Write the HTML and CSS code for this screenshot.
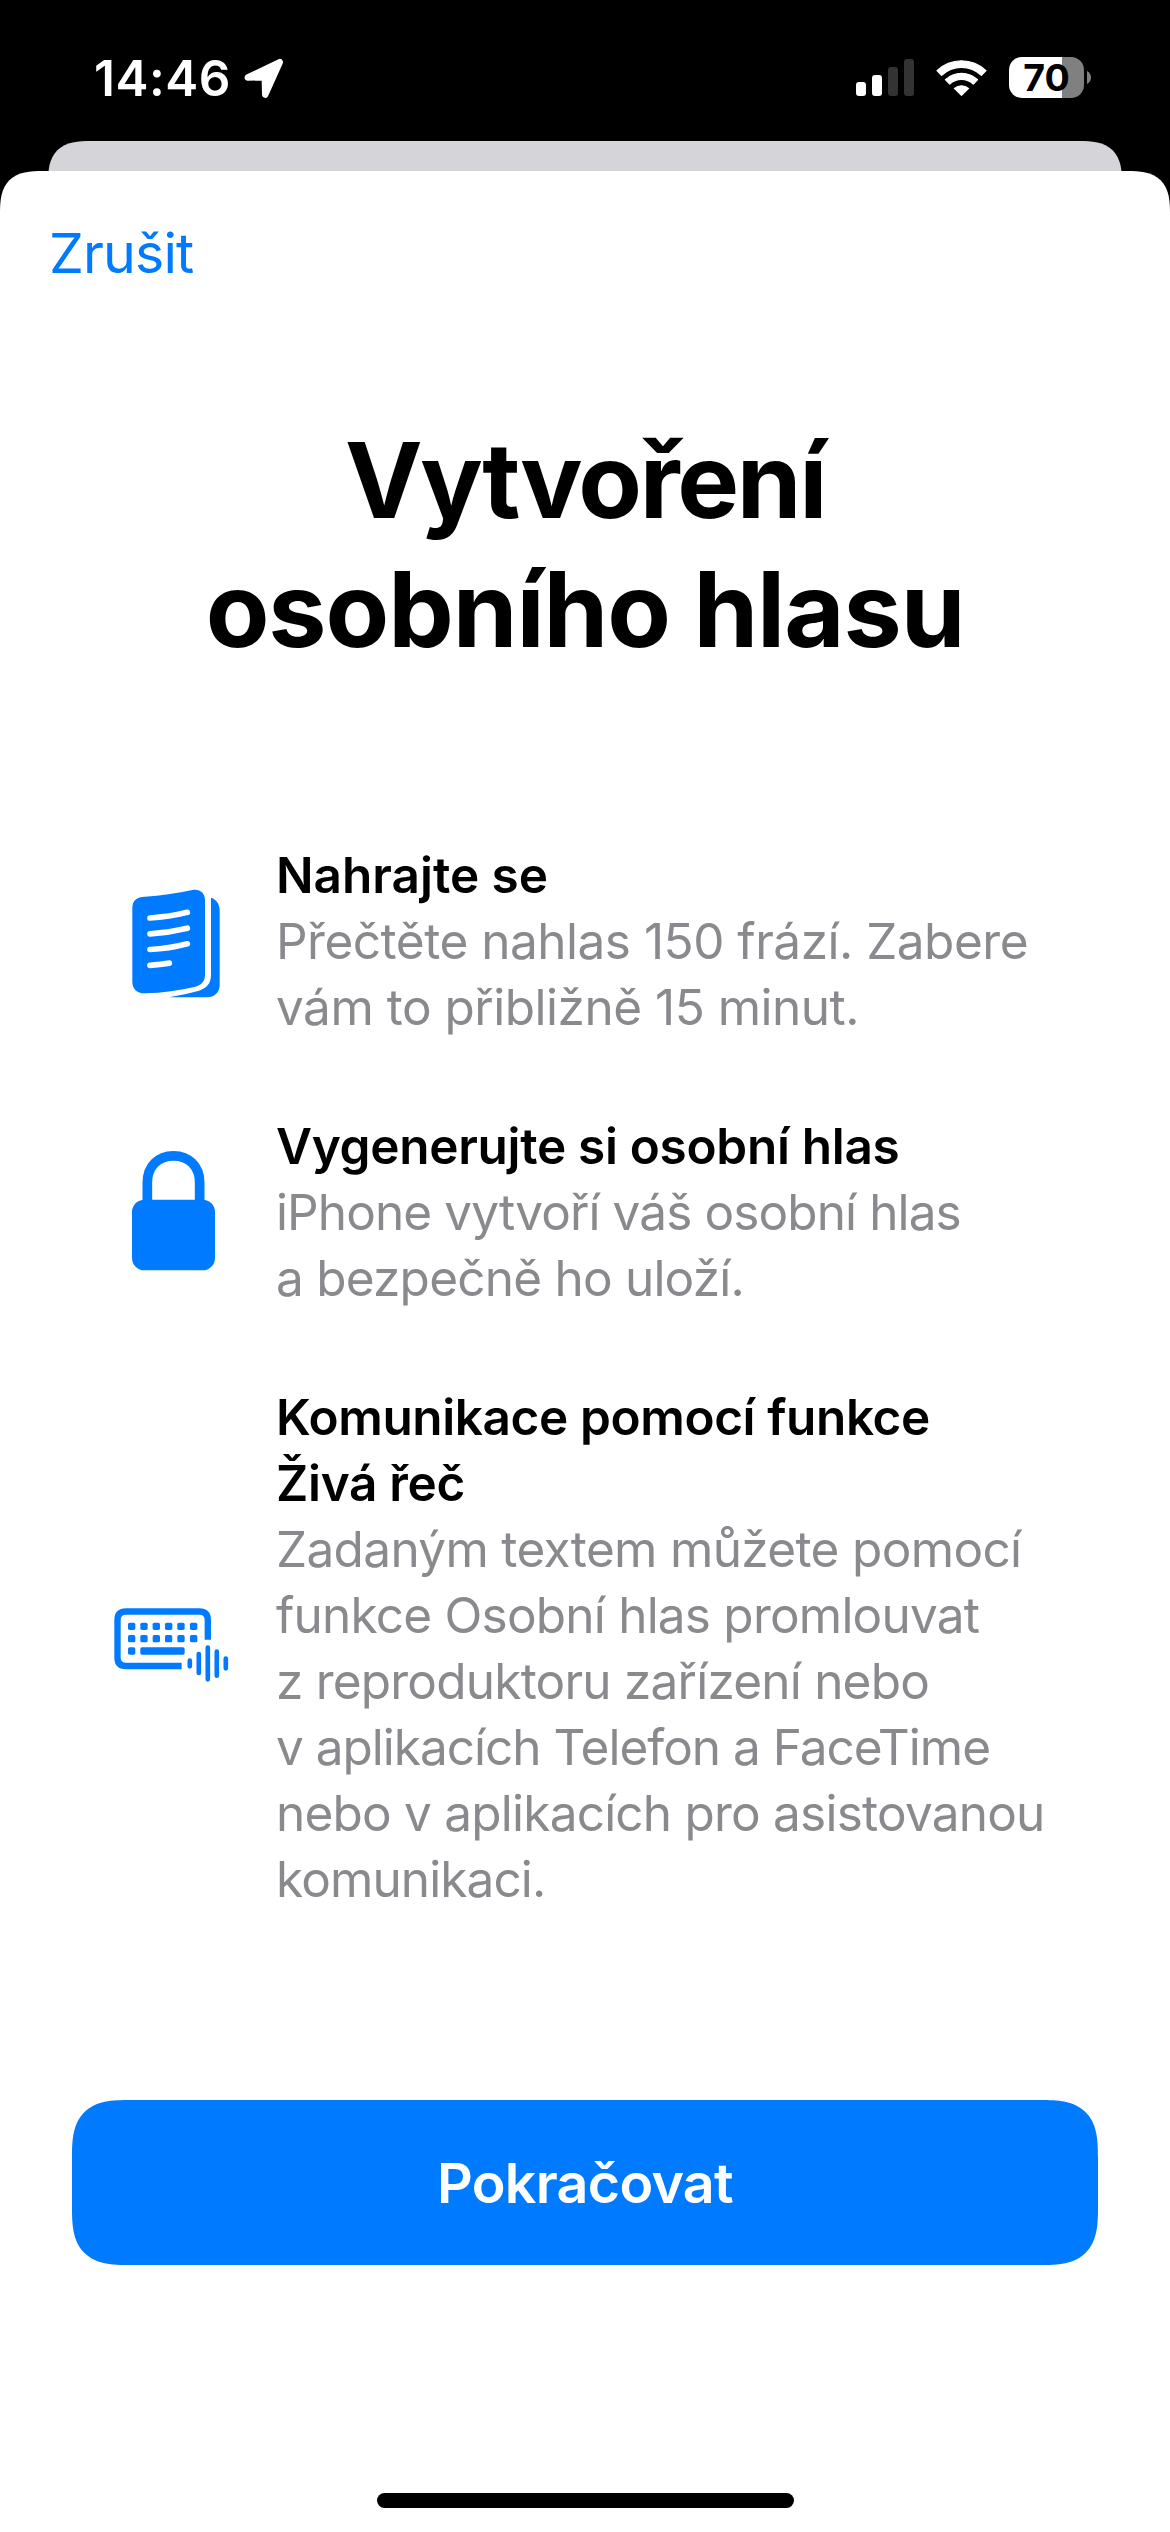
FILE: index.html
```html
<!DOCTYPE html>
<html lang="cs">
<head>
<meta charset="utf-8">
<title>Vytvoření osobního hlasu</title>
<link rel="stylesheet" href="styles.css">
</head>
<body>
<div class="screen">
  <header class="status-bar">
    <div class="status-left">
      <span class="time">14:46</span>
      <svg class="location" viewBox="0 0 40 41" width="40" height="41"><path d="M3.8 19.5 35.8 4.1 21.2 36.7 20.8 19.3Z" fill="#fff" stroke="#fff" stroke-width="6.4" stroke-linejoin="round"/></svg>
    </div>
    <div class="status-right">
      <svg class="signal" viewBox="0 0 58 37" width="58" height="37">
        <g fill="#fff"><rect x="0" y="23" width="10" height="14" rx="3"/><rect x="16" y="16" width="10" height="21" rx="3"/></g>
        <g fill="#333"><rect x="32" y="8" width="10" height="29" rx="3"/><rect x="48" y="0" width="10" height="37" rx="3"/></g>
      </svg>
      <svg class="wifi" viewBox="0 0 51 37" width="51" height="37">
        <g fill="#fff" stroke="#fff" stroke-linejoin="round" stroke-width="1.2">
          <path d="M1 11.7A35.4 35.4 0 0 1 50 11.7L45.4 16.4A28.8 28.8 0 0 0 5.6 16.4Z"/>
          <path d="M9.4 20.7A23.4 23.4 0 0 1 41.6 20.7L37.3 25A17.2 17.2 0 0 0 13.7 25Z"/>
          <path d="M18.4 29.4A11 11 0 0 1 32.6 29.4L25.5 36.3Z"/>
        </g>
      </svg>
      <div class="battery">
        <div class="battery-body"><span class="battery-level">70</span></div>
        <svg class="battery-cap" viewBox="0 0 4 13" width="4" height="13"><path d="M0 0Q4 2.5 4 6.5T0 13Z" fill="#808080"/></svg>
      </div>
    </div>
  </header>
  <div class="card-behind"></div>
  <main class="sheet">
    <nav class="nav"><a class="cancel">Zrušit</a></nav>
    <h1 class="title"><span class="line title-first">Vytvoření</span><span class="line title-second">osobního hlasu</span></h1>
    <section class="features">
      <article class="feature">
        <svg class="icon icon-doc" viewBox="96 87 264 327" width="88" height="109">
          <path fill="#007aff" d="M97 145C97 122 110 110 135 110Q205 106 277 90C300 86 315 99 315 121V345C315 364 304 375 286 380Q215 397 134 400C110 400 97 386 97 365ZM333 113C350 119 359 132 359 152V373C359 398 345 412 319 412H207Q255 404 297 392C323 384 333 368 333 343Z"/>
          <path fill="none" stroke="#fff" stroke-width="17" stroke-linecap="round" d="M150 174Q207 171 262 157M150 221.500Q207 218 262 204.500M150 268.500Q207 266 262 251.500M150 316Q180 314 208 309.500"/>
        </svg>
        <div class="copy">
          <h2><span class="line">Nahrajte se</span></h2>
          <p><span class="line track-5">Přečtěte nahlas 150 frází. Zabere</span><span class="line track-5">vám to přibližně 15 minut.</span></p>
        </div>
      </article>
      <article class="feature">
        <svg class="icon icon-lock" viewBox="96 65 249 358" width="83" height="119.300">
          <rect x="96" y="211" width="249" height="212" rx="37" fill="#007aff"/>
          <path fill="none" stroke="#007aff" stroke-width="29" d="M142 213V160C142 112 174 79.500 220.500 79.500S299 112 299 160V213"/>
        </svg>
        <div class="copy">
          <h2><span class="line track-3">Vygenerujte si osobní hlas</span></h2>
          <p><span class="line track-9">iPhone vytvoří váš osobní hlas</span><span class="line track-8">a&nbsp;bezpečně ho uloží.</span></p>
        </div>
      </article>
      <article class="feature">
        <svg class="icon icon-keyboard" viewBox="41 53 343 221" width="114.300" height="73.700">
          <g fill="none" stroke="#007aff">
            <path stroke-width="19" d="M244 227H77Q51.500 227 51.500 202V89Q51.500 63.500 77 63.500H297Q322.500 63.500 322.500 89V148"/>
            <path stroke-width="14" stroke-linecap="round" d="M268.500 211V228M295.500 191V248M322.500 172V267M349.500 184V256M376.500 205V234"/>
          </g>
          <g fill="#007aff">
            <rect x="83" y="97" width="22" height="22" rx="5"/><rect x="120" y="97" width="22" height="22" rx="5"/><rect x="157" y="97" width="22" height="22" rx="5"/><rect x="194" y="97" width="22" height="22" rx="5"/><rect x="231" y="97" width="22" height="22" rx="5"/><rect x="269" y="97" width="22" height="22" rx="5"/>
            <rect x="83" y="134" width="22" height="22" rx="5"/><rect x="120" y="134" width="22" height="22" rx="5"/><rect x="157" y="134" width="22" height="22" rx="5"/><rect x="194" y="134" width="22" height="22" rx="5"/><rect x="231" y="134" width="22" height="22" rx="5"/><rect x="269" y="134" width="22" height="22" rx="5"/>
            <rect x="83" y="171" width="22" height="22" rx="5"/><rect x="120" y="171" width="133" height="22" rx="5"/>
          </g>
        </svg>
        <div class="copy">
          <h2><span class="line track-4">Komunikace pomocí funkce</span><span class="line track-3">Živá řeč</span></h2>
          <p><span class="line track-7">Zadaným textem můžete pomocí</span><span class="line track-8">funkce Osobní hlas promlouvat</span><span class="line track-8">z&nbsp;reproduktoru zařízení nebo</span><span class="line track-10">v&nbsp;aplikacích Telefon a&nbsp;FaceTime</span><span class="line track-8">nebo v&nbsp;aplikacích pro asistovanou</span><span class="line track-9">komunikaci.</span></p>
        </div>
      </article>
    </section>
    <button class="continue" type="button">Pokračovat</button>
    <div class="home-indicator"></div>
  </main>
</div>
</body>
</html>
```
FILE: styles.css
```css
* { box-sizing: border-box; }

body { margin: 0; background: #000; }

.screen {
  width: 1170px;
  height: 2532px;
  display: flex;
  flex-direction: column;
  background: #000;
  font-family: Inter, "Liberation Sans", sans-serif;
}

/* Status bar */
.status-bar {
  height: 141px;
  flex: none;
  display: flex;
  justify-content: space-between;
  align-items: flex-start;
  padding: 57px 79px 0 94px;
}
.status-left { display: flex; align-items: flex-start; }
.time {
  width: 150px;
  color: #fff;
  font-size: 49.5px;
  font-weight: 600;
  line-height: 42px;
  letter-spacing: .5px;
}
.location { margin-top: 1px; }
.status-right { display: flex; align-items: flex-start; }
.signal { margin: 2px 22px 0 0; }
.wifi { margin: 2px 22px 0 0; }
.battery { display: flex; align-items: center; gap: 3px; }
.battery-body {
  width: 75px;
  height: 41px;
  border-radius: 13px;
  background: linear-gradient(90deg, #fff 53px, #808080 53px);
  text-align: center;
}
.battery-level {
  display: block;
  color: #000;
  font-size: 37.5px;
  font-weight: 700;
  line-height: 41px;
}

/* Sheets */
.card-behind {
  height: 60px;
  flex: none;
  margin: 0 48px -30px;
  background: #d5d4d9;
  border-radius: 43px 43px 0 0;
  corner-shape: superellipse(1.5);
}
.sheet {
  flex: 1;
  display: flex;
  flex-direction: column;
  align-items: center;
  padding-top: 49px;
  background: #fff;
  border-radius: 43px 43px 0 0;
  corner-shape: superellipse(1.5);
}
.nav { align-self: flex-start; padding-left: 49px; height: 66px; }
.cancel {
  color: #007aff;
  font-size: 55.5px;
  line-height: 66px;
  letter-spacing: -.87px;
}

.line { display: block; white-space: nowrap; }

.title {
  margin: 130px 0 168px;
  font-size: 104px;
  font-weight: 700;
  line-height: 129px;
  text-align: center;
  color: #000;
}
.title-first { letter-spacing: -2.35px; }
.title-second { letter-spacing: -1.08px; }

/* Feature list */
.features {
  align-self: stretch;
  display: flex;
  flex-direction: column;
  gap: 73px;
  padding-left: 100px;
}
.feature {
  display: grid;
  grid-template-columns: 147px 1fr;
  column-gap: 29px;
  align-items: center;
}
.icon { justify-self: center; display: block; overflow: visible; }
.icon-doc { margin: 5px 0 0 5px; }
.icon-lock { margin-bottom: 2px; }
.icon-keyboard { margin: 0 5px 7px 0; }
.copy { font-size: 49.5px; line-height: 66px; }
.copy h2 { margin: 0; font-size: inherit; font-weight: 600; color: #000; }
.copy p { margin: 0; color: #8a8a8e; }

/* Letter tracking steps, in tenths of a pixel */
.track-3 { letter-spacing: -.3px; }
.track-4 { letter-spacing: -.39px; }
.track-5 { letter-spacing: -.49px; }
.track-7 { letter-spacing: -.66px; }
.track-8 { letter-spacing: -.78px; }
.track-9 { letter-spacing: -.89px; }
.track-10 { letter-spacing: -1px; }

.continue {
  width: 1026px;
  height: 165px;
  margin: 188px 0 0;
  padding: 0;
  border: 0;
  border-radius: 58px;
  corner-shape: superellipse(1.54);
  background: #007aff;
  color: #fff;
  font-family: inherit;
  font-size: 55.5px;
  font-weight: 600;
  letter-spacing: -.69px;
}
.home-indicator {
  width: 417px;
  height: 15px;
  margin-top: 228px;
  border-radius: 8px;
  background: #000;
}
```
